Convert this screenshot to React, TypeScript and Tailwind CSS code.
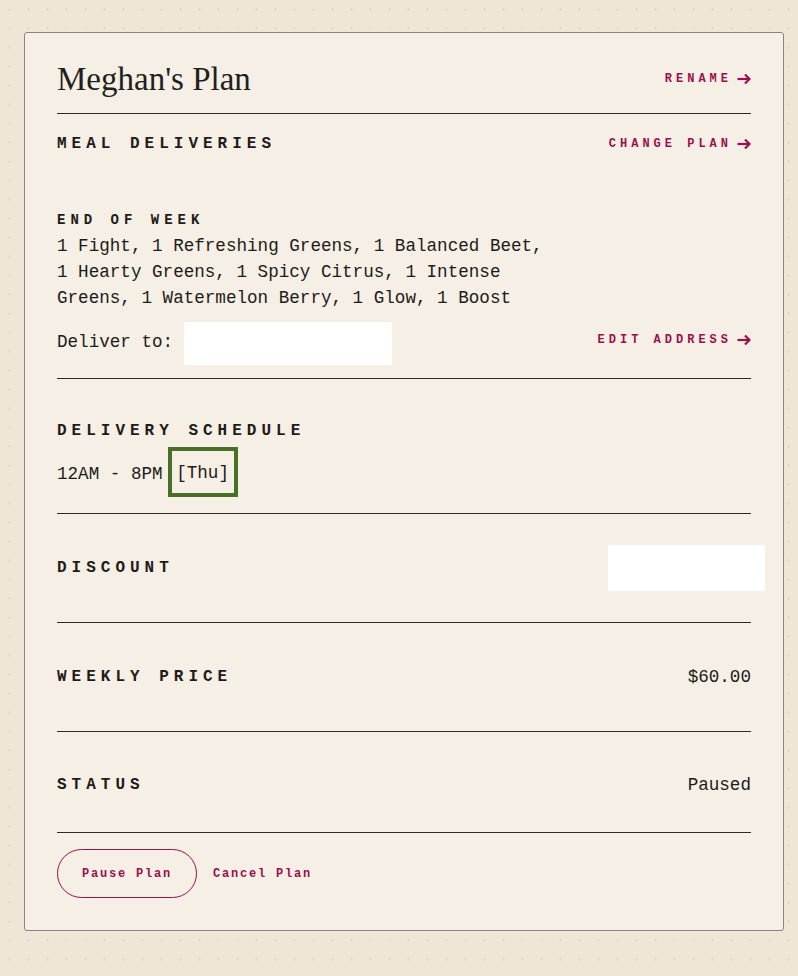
const pink = "text-[#9b0f4d]";

function Arrow() {
  return (
    <svg width="14" height="12" viewBox="0 0 14 12" fill="none" className="shrink-0">
      <path d="M0.5 6H12.5" stroke="#9b0f4d" strokeWidth="2.2" />
      <path d="M8 1.5L12.5 6L8 10.5" stroke="#9b0f4d" strokeWidth="2.2" />
    </svg>
  );
}

function ActionLink({ label }: { label: string }) {
  return (
    <a href="#" className="flex items-center gap-[5px]">
      <span className={`font-['Liberation_Mono',monospace] text-[12px] font-bold uppercase tracking-[4px] ${pink}`}>
        {label}
      </span>
      <Arrow />
    </a>
  );
}

function Heading({ children }: { children: React.ReactNode }) {
  return (
    <h3 className="font-['Liberation_Mono',monospace] text-[16px] leading-[20px] font-bold uppercase tracking-[5px] text-[#1e1b18]">
      {children}
    </h3>
  );
}

export default function App() {
  return (
    <div className="min-h-[976px] w-full bg-[#efe6d7] bg-[radial-gradient(#e7d9c1_1.2px,transparent_1.3px)] bg-[size:19px_19px] pt-8 pl-6">
      <div className="w-[760px] rounded-[3px] border border-[#8a857c] bg-[#f5efe6] px-8 pb-8 font-['Liberation_Mono',monospace] text-[17.6px] leading-[26px] text-[#1e1b18]">
        {/* Header */}
        <div className="flex items-center justify-between border-b border-[#2e2a27] pt-[26px] pb-[14px]">
          <h1 className="font-['Liberation_Serif',serif] text-[33px] leading-[40px] text-[#231f1c]">
            Meghan's Plan
          </h1>
          <ActionLink label="Rename" />
        </div>

        {/* Meal deliveries */}
        <div className="border-b border-[#2e2a27] pt-[17px] pb-[13px]">
          <div className="flex items-center justify-between">
            <Heading>Meal Deliveries</Heading>
            <ActionLink label="Change Plan" />
          </div>
          <h4 className="mt-[53px] font-['Liberation_Mono',monospace] text-[14px] leading-[20px] font-bold uppercase tracking-[5px]">
            End of Week
          </h4>
          <p className="mt-[3px] w-[505px]">
            1 Fight, 1 Refreshing Greens, 1 Balanced Beet, 1 Hearty Greens, 1 Spicy Citrus, 1 Intense Greens, 1 Watermelon Berry, 1 Glow, 1 Boost
          </p>
          <div className="mt-[11px] flex items-center justify-between">
            <div className="flex items-center">
              <span className="-mt-[4px]">Deliver to:</span>
              <div className="ml-[11px] h-[43px] w-[208px] bg-white" />
            </div>
            <div className="-mt-[8px]">
              <ActionLink label="Edit Address" />
            </div>
          </div>
        </div>

        {/* Delivery schedule */}
        <div className="border-b border-[#2e2a27] pt-[42px] pb-[16px]">
          <Heading>Delivery Schedule</Heading>
          <div className="mt-[6px] flex items-center">
            <span className="pt-[3px]">12AM - 8PM</span>
            <span className="ml-[5px] inline-flex h-[50px] w-[70px] items-center justify-center border-4 border-[#4a6f27] pt-[2px]">
              [Thu]
            </span>
          </div>
        </div>

        {/* Discount */}
        <div className="flex h-[109px] items-center justify-between border-b border-[#2e2a27]">
          <Heading>Discount</Heading>
          <div className="mr-[-14px] h-[46px] w-[157px] bg-white" />
        </div>

        {/* Weekly price */}
        <div className="flex h-[109px] items-center justify-between border-b border-[#2e2a27]">
          <Heading>Weekly Price</Heading>
          <span>$60.00</span>
        </div>

        {/* Status */}
        <div className="flex h-[101px] items-center justify-between border-b border-[#2e2a27] pt-[5px]">
          <Heading>Status</Heading>
          <span>Paused</span>
        </div>

        {/* Actions */}
        <div className="flex items-center gap-4 pt-4">
          <button className={`flex h-[49px] w-[140px] items-center justify-center rounded-full border border-[#9b0f4d] font-['Liberation_Mono',monospace] text-[12px] font-bold tracking-[1.8px] ${pink}`}>
            Pause Plan
          </button>
          <button className={`font-['Liberation_Mono',monospace] text-[12px] font-bold tracking-[1.8px] ${pink}`}>
            Cancel Plan
          </button>
        </div>
      </div>
    </div>
  );
}
